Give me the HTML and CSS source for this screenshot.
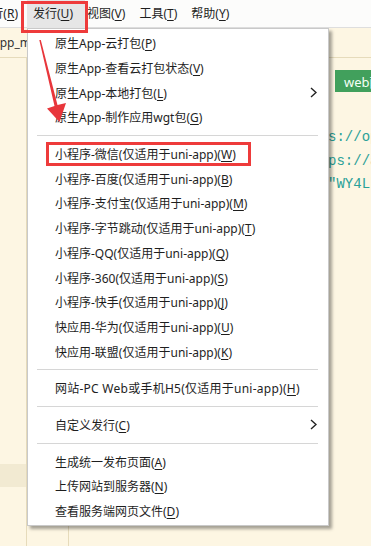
FILE: index.html
```html
<!DOCTYPE html>
<html>
<head>
  <title>发行菜单</title>
  <link rel="stylesheet" href="styles.css">
</head>
<body>
  <div class="menubar">
    <span class="menu-title first"><span>运行(<u>R</u>)</span></span>
    <span class="menu-title active">发行(<u>U</u>)</span>
    <span class="menu-title">视图(<u>V</u>)</span>
    <span class="menu-title">工具(<u>T</u>)</span>
    <span class="menu-title">帮助(<u>Y</u>)</span>
  </div>

  <div class="tabs">
    <span class="tab">App_manifest.json</span>
  </div>

  <div class="workspace">
    <div class="sidebar">
      <div class="sidebar-hl"></div>
    </div>
    <div class="gutter"></div>
    <div class="editor">
      <div class="toolbar">
        <button class="web-btn">web配置</button>
      </div>
<pre class="code">              "domain" : "https://open.weixin.qq.com",
              "domain2" : "https://api.weixin.qq.com",
                "appsecret" : "WY4LkQ9xT2"</pre>
    </div>
  </div>

  <div class="dropdown">
    <div class="item"><span>原生App-云打包(<u>P</u>)</span></div>
    <div class="item"><span>原生App-查看云打包状态(<u>V</u>)</span></div>
    <div class="item"><span>原生App-本地打包(<u>L</u>)</span>
      <svg class="chevron" width="7" height="11" viewBox="0 0 7 11"><polyline points="1,1 6,5.5 1,10" /></svg>
    </div>
    <div class="item"><span>原生App-制作应用wgt包(<u>G</u>)</span></div>
    <div class="sep"></div>
    <div class="item"><span>小程序-微信(仅适用于uni-app)(<u>W</u>)</span></div>
    <div class="item"><span>小程序-百度(仅适用于uni-app)(<u>B</u>)</span></div>
    <div class="item"><span>小程序-支付宝(仅适用于uni-app)(<u>M</u>)</span></div>
    <div class="item"><span>小程序-字节跳动(仅适用于uni-app)(<u>T</u>)</span></div>
    <div class="item"><span>小程序-QQ(仅适用于uni-app)(<u>Q</u>)</span></div>
    <div class="item"><span>小程序-360(仅适用于uni-app)(<u>S</u>)</span></div>
    <div class="item"><span>小程序-快手(仅适用于uni-app)(<u>J</u>)</span></div>
    <div class="item"><span>快应用-华为(仅适用于uni-app)(<u>U</u>)</span></div>
    <div class="item"><span>快应用-联盟(仅适用于uni-app)(<u>K</u>)</span></div>
    <div class="sep"></div>
    <div class="item wide"><span>网站-PC Web或手机H5(仅适用于uni-app)(<u>H</u>)</span></div>
    <div class="sep"></div>
    <div class="item"><span>自定义发行(<u>C</u>)</span>
      <svg class="chevron" width="7" height="11" viewBox="0 0 7 11"><polyline points="1,1 6,5.5 1,10" /></svg>
    </div>
    <div class="sep"></div>
    <div class="item"><span>生成统一发布页面(<u>A</u>)</span></div>
    <div class="item"><span>上传网站到服务器(<u>N</u>)</span></div>
    <div class="item"><span>查看服务端网页文件(<u>D</u>)</span></div>
  </div>

  <!-- annotations drawn over the screenshot -->
  <div class="mark mark-menu"></div>
  <div class="mark mark-item"></div>
  <svg class="arrow" width="34" height="88" viewBox="0 0 34 88">
    <polygon points="3.3,2 4.8,2 21.5,67 30,65 23.5,84 11,70.5 18.5,68" />
  </svg>
</body>
</html>
```

FILE: styles.css
```css
body {
  margin: 0;
  width: 371px;
  height: 546px;
  overflow: hidden;
  position: relative;
  background-color: #fdf6e3;
  font-family: "Noto Sans", "Noto Sans CJK SC", sans-serif;
  font-size: 12px;
  color: #1e1e1e;
}

u {
  text-decoration-thickness: 1px;
  text-underline-offset: 2px;
}

.menubar {
  height: 28px;
  display: flex;
  align-items: center;
  background-color: #fcfcfb;
  border-bottom: 1px solid #dedede;
  box-sizing: border-box;
}

.menu-title {
  height: 28px;
  line-height: 28px;
  padding: 0 7px;
  white-space: nowrap;
  flex-shrink: 0;
}

.menu-title.first {
  width: 18px;
  padding: 0;
  margin-right: 9px;
  display: flex;
  justify-content: flex-end;
  overflow: hidden;
}

.menu-title.active {
  background-color: #e6e6e6;
  padding: 0 12px 0 6px;
  margin-right: -5px;
}

.tabs {
  height: 29px;
  border-bottom: 1px solid #e6dbbb;
  display: flex;
  align-items: center;
  overflow: hidden;
}

.tab {
  margin-left: -8px;
  white-space: nowrap;
  color: #333333;
}

.workspace {
  display: flex;
  height: 488px;
}

.sidebar {
  width: 26px;
  border-right: 1px solid #e6dbbb;
  padding-top: 406px;
}

.sidebar-hl {
  height: 23px;
  background-color: #f2ead2;
}

.gutter {
  width: 41px;
  border-right: 1px solid #e6dbbb;
}

.editor {
  flex: 1;
  overflow: hidden;
}

.toolbar {
  padding: 12px 0 0 266px;
}

.web-btn {
  height: 22px;
  width: 80px;
  border: none;
  background-color: #41a05c;
  color: #f4fff6;
  font-family: "Noto Sans", "Noto Sans CJK SC", sans-serif;
  font-size: 13px;
  text-align: left;
  padding: 0 0 0 9px;
}

.code {
  margin: 34px 0 0 0;
  padding-left: 7px;
  font-family: "Liberation Mono", monospace;
  font-size: 14px;
  line-height: 23.5px;
  color: #2aa198;
}

.dropdown {
  position: absolute;
  left: 27px;
  top: 28px;
  width: 302px;
  box-sizing: border-box;
  background-color: #ffffff;
  border: 1px solid #c9c9c9;
  padding: 2px 0;
  box-shadow: 3px 3px 3px rgba(0, 0, 0, 0.35);
}

.item {
  height: 24.7px;
  display: flex;
  align-items: center;
  justify-content: space-between;
  padding: 0 11px 0 27px;
  white-space: nowrap;
}

.item.wide {
  letter-spacing: 0.25px;
}

.chevron polyline {
  fill: none;
  stroke: #222222;
  stroke-width: 1.4;
}

.sep {
  height: 12px;
  display: flex;
  align-items: center;
  padding: 0 10px 0 9px;
}

.sep::before {
  content: "";
  flex: 1;
  height: 1px;
  background-color: #d6d6d6;
}

.mark {
  position: absolute;
  box-sizing: border-box;
  border: 3px solid #ee3b3b;
}

.mark-menu {
  left: 21px;
  top: 1px;
  width: 67px;
  height: 32px;
}

.mark-item {
  left: 46px;
  top: 142px;
  width: 205px;
  height: 24px;
}

.arrow {
  position: absolute;
  left: 36px;
  top: 38px;
}

.arrow polygon {
  fill: #e8363b;
}
```
